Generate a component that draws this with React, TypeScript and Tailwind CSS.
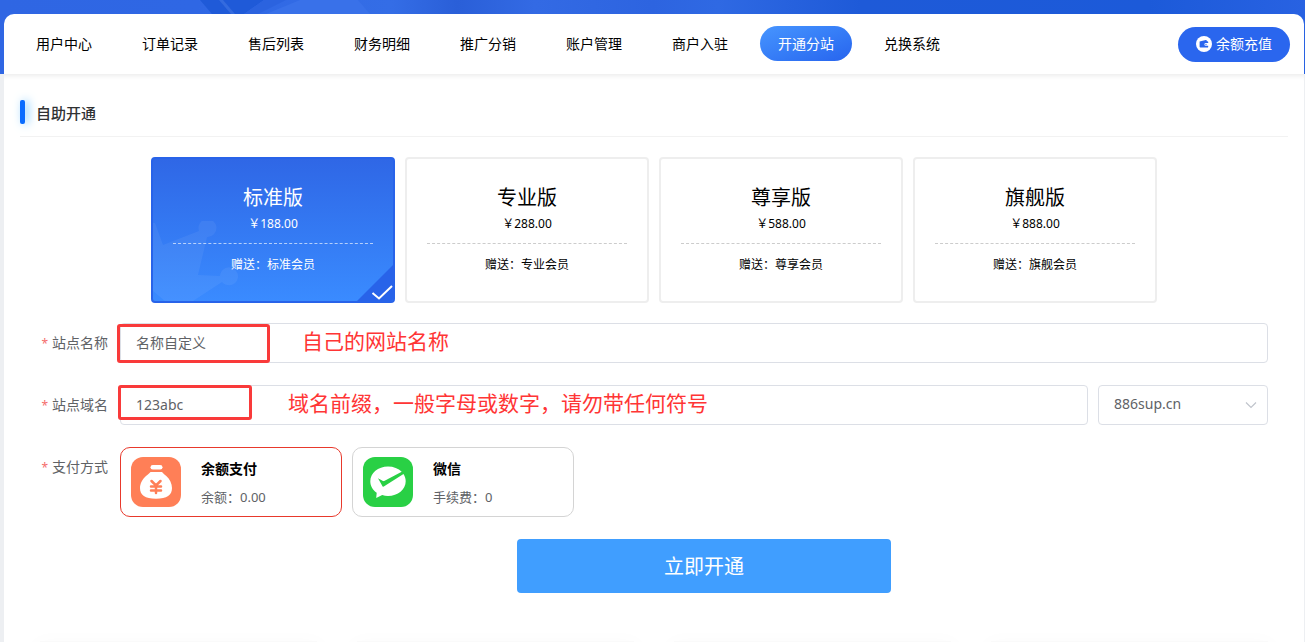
import { useState } from 'react';

interface Plan {
  id: string;
  name: string;
  price: string;
  gift: string;
}

const navItems = [
  '用户中心',
  '订单记录',
  '售后列表',
  '财务明细',
  '推广分销',
  '账户管理',
  '商户入驻',
  '开通分站',
  '兑换系统',
];

const plans: Plan[] = [
  { id: 'standard', name: '标准版', price: '188.00', gift: '标准会员' },
  { id: 'pro', name: '专业版', price: '288.00', gift: '专业会员' },
  { id: 'premium', name: '尊享版', price: '588.00', gift: '尊享会员' },
  { id: 'flagship', name: '旗舰版', price: '888.00', gift: '旗舰会员' },
];

const labelClass = '-ml-1 w-[104px] shrink-0 pr-3 text-right text-sm leading-10 text-[#606266]';
const inputClass =
  'h-10 w-full rounded border border-[#dcdfe6] bg-white px-[15px] pb-0.5 text-sm text-[#606266] outline-none';

function BannerTexture() {
  return (
    <svg
      className="absolute inset-0 h-full w-full"
      viewBox="0 0 1305 74"
      preserveAspectRatio="none"
      aria-hidden="true"
    >
      <defs>
        <linearGradient id="banner" x1="0" x2="1" y1="0" y2="0">
          <stop offset="0" stopColor="#2f66e3" />
          <stop offset="0.15" stopColor="#2f67e4" />
          <stop offset="0.3" stopColor="#346de6" />
          <stop offset="0.35" stopColor="#2a5fd8" />
          <stop offset="0.41" stopColor="#336ae4" />
          <stop offset="0.5" stopColor="#2d64e0" />
          <stop offset="0.55" stopColor="#2f69e3" />
          <stop offset="0.66" stopColor="#1e5ad8" />
          <stop offset="0.88" stopColor="#1c5ad9" />
          <stop offset="1" stopColor="#2862e2" />
        </linearGradient>
      </defs>
      <rect width="1305" height="74" fill="url(#banner)" />
      <path d="M200 0h64l-20 14h-32z" fill="#1f5ad8" />
      <path d="M219 0h4l12 14h-4z" fill="#4a7be6" opacity="0.5" />
      <path d="M264 0h22l-28 14h-14z" fill="#2b63df" />
      <path d="M300 0h58l12 14h-104z" fill="#3971e9" />
    </svg>
  );
}

function WalletIcon() {
  return (
    <svg className="h-4 w-4" viewBox="0 0 16 16" aria-hidden="true">
      <circle cx="8" cy="8" r="8" fill="#fff" />
      <path
        d="M3.6 5.5 9.8 4c.6-.1 1 .2 1 .8v.5h.6c.5 0 .8.3.8.8v.9H9.8a1.4 1.4 0 0 0 0 2.8h2.4v.9c0 .6-.3.9-.8.9H4.4c-.5 0-.8-.3-.8-.8z"
        fill="#2a66ee"
      />
      <circle cx="10" cy="8.4" r=".6" fill="#2a66ee" />
    </svg>
  );
}

function MoneyBagIcon() {
  return (
    <svg className="h-[50px] w-[50px] shrink-0" viewBox="0 0 50 50" aria-hidden="true">
      <rect width="50" height="50" rx="12" fill="#ff7f57" />
      <rect x="19.5" y="8" width="12" height="4.6" rx="2.3" fill="#fff" />
      <path
        d="M19.5 15h11.500c1.200 1.500 2.500 2.400 4.300 4C38.800 22 41 26.500 41 31c0 7-5 10.800-16 10.800S9 38 9 31c0-4.500 2.500-9 6-12 1.800-1.600 3.300-2.500 4.500-4z"
        fill="#fff"
      />
      <path
        d="m20.500 24 4.500 4.500 4.500-4.500M20 29.500h10M20 33.500h10M25 29v7"
        fill="none"
        stroke="#ff7f57"
        strokeWidth="2.500"
        strokeLinecap="round"
      />
    </svg>
  );
}

function WechatPayIcon() {
  return (
    <svg className="h-[50px] w-[50px] shrink-0" viewBox="0 0 50 50" aria-hidden="true">
      <rect width="50" height="50" rx="12" fill="#29d045" />
      <path
        d="M25 9.500C15 9.500 7.300 16 7.300 24.300c0 4.700 2.500 8.800 6.400 11.500L13.200 41l6-3c1.800.6 3.800.9 5.800.9 9.900 0 17.700-6.500 17.700-14.700 0-2.700-.8-5.100-2.200-7.300L20.800 29.600c-.5.3-1 .1-1.300-.4L15 21.300l5 2.800c.4.200.8.200 1.200 0l17.500-9.300C35.500 11.500 30.500 9.500 25 9.500z"
        fill="#fff"
      />
    </svg>
  );
}

function CrownMark() {
  return (
    <svg className="absolute bottom-0 left-0 h-20 w-[88px]" viewBox="0 0 88 80" aria-hidden="true">
      <g fill="#fff" opacity="0.06">
        <path d="M0 2h2l8 22 36-14a9 9 0 1 1 8 6l-9 38 22 1a9 9 0 1 1 2 6L40 80H12L0 70z" />
      </g>
    </svg>
  );
}

function PlanCard({ plan, selected, onSelect }: { plan: Plan; selected: boolean; onSelect: () => void }) {
  return (
    <label
      className={`relative flex h-[146px] w-[244px] cursor-pointer flex-col items-center overflow-hidden rounded border-2 pt-[25px] ${
        selected
          ? 'border-[#2863e9] bg-linear-to-b from-[#2f67e6] to-[#3a8bff] text-white'
          : 'border-[#eeeeee] bg-white text-black'
      }`}
    >
      <input
        type="radio"
        name="plan"
        className="absolute inset-0 h-full w-full cursor-pointer appearance-none"
        checked={selected}
        onChange={onSelect}
      />
      {selected && <CrownMark />}
      <span className="text-xl leading-7">{plan.name}</span>
      <span className="text-xs leading-6">￥{plan.price}</span>
      <span
        className={`mt-[7px] w-[200px] border-t border-dashed ${selected ? 'border-[#b5cffb]' : 'border-[#cccccc]'}`}
      />
      <span className="mt-[11px] text-xs leading-5">赠送：{plan.gift}</span>
      {selected && (
        <svg className="absolute right-0 bottom-0 h-9 w-9" viewBox="0 0 36 36" aria-hidden="true">
          <path d="M36 0v36H0z" fill="#2863e9" />
          <path d="m15.500 28 6.500 5.500L35 21" fill="none" stroke="#fff" strokeWidth="2" />
        </svg>
      )}
    </label>
  );
}

export default function App() {
  const [plan, setPlan] = useState('standard');
  const [payment, setPayment] = useState('balance');
  const [siteName, setSiteName] = useState('名称自定义');
  const [prefix, setPrefix] = useState('123abc');

  const payments = [
    { id: 'balance', title: '余额支付', note: '余额：0.00', icon: <MoneyBagIcon /> },
    { id: 'wechat', title: '微信', note: '手续费：0', icon: <WechatPayIcon /> },
  ];

  return (
    <div className="flex min-h-screen flex-col bg-[#edeff2] font-['Noto_Sans','Noto_Sans_CJK_SC',sans-serif]">
      <div className="relative pt-3.5 pr-px pl-1">
        <BannerTexture />
        <header className="relative flex h-[60px] items-center justify-between rounded-t-[10px] bg-white px-3.5">
          <nav className="mb-0.5 flex gap-3.5">
            {navItems.map((item) => (
              <a
                key={item}
                href="#"
                className={`h-[35px] rounded-full px-[18px] text-sm leading-[35px] whitespace-nowrap ${
                  item === '开通分站'
                    ? 'bg-linear-to-br from-[#4795ff] to-[#2864ee] text-white'
                    : 'text-black'
                }`}
              >
                {item}
              </a>
            ))}
          </nav>
          <button
            type="button"
            className="flex h-[35px] items-center gap-1 rounded-full bg-[#2a66ee] px-[18px] text-sm whitespace-nowrap text-white"
          >
            <WalletIcon />
            余额充值
          </button>
        </header>
      </div>

      <main className="mr-px ml-1 flex flex-1 flex-col overflow-hidden bg-white px-4 shadow-[inset_0_6px_5px_-4px_#ececec]">
        <div className="flex h-[63px] items-center gap-[11px] border-b border-[#f2f2f2] pt-3.5">
          <span className="h-6 w-[5px] rounded-xs bg-[#0a6cff] shadow-[3px_0_10px_#7cc8ff]" />
          <h2 className="pt-0.5 text-[15px] font-medium text-[#303133]">自助开通</h2>
        </div>

        <form onSubmit={(e) => e.preventDefault()} className="pt-5">
          <div role="radiogroup" aria-label="版本" className="flex flex-wrap justify-center gap-2.5">
            {plans.map((p) => (
              <PlanCard key={p.id} plan={p} selected={plan === p.id} onSelect={() => setPlan(p.id)} />
            ))}
          </div>

          <div className="flex flex-col gap-[22px] pt-5">
            <div className="flex pr-5">
              <label htmlFor="site-name" className={labelClass}>
                <span className="mr-1 text-xs text-[#f56c6c]">*</span>站点名称
              </label>
              <div className="relative flex-1">
                <input
                  id="site-name"
                  className={inputClass}
                  value={siteName}
                  onChange={(e) => setSiteName(e.target.value)}
                />
                <span className="pointer-events-none absolute top-px -left-[3px] h-[39px] w-[153px] rounded-[3px] border-3 border-[#f93a3a]" />
                <span className="pointer-events-none absolute top-0 left-[182px] text-[21px] leading-9 text-[#ff3535]">
                  自己的网站名称
                </span>
              </div>
            </div>

            <div className="flex pr-5">
              <label htmlFor="site-prefix" className={labelClass}>
                <span className="mr-1 text-xs text-[#f56c6c]">*</span>站点域名
              </label>
              <div className="relative flex-1">
                <input
                  id="site-prefix"
                  className={inputClass}
                  value={prefix}
                  onChange={(e) => setPrefix(e.target.value)}
                />
                <span className="pointer-events-none absolute top-0 -left-0.5 h-[35px] w-[134px] rounded-[3px] border-3 border-[#f93a3a]" />
                <span className="pointer-events-none absolute top-0 left-[168px] text-[21px] leading-9 whitespace-nowrap text-[#ff3535]">
                  域名前缀，一般字母或数字，请勿带任何符号
                </span>
              </div>
              <div className="relative ml-2.5 w-[170px]">
                <select aria-label="域名后缀" className={`${inputClass} appearance-none`}>
                  <option>886sup.cn</option>
                </select>
                <svg
                  className="pointer-events-none absolute top-[13px] right-2.5 h-3.5 w-3.5"
                  viewBox="0 0 14 14"
                  fill="none"
                  stroke="#c0c4cc"
                  aria-hidden="true"
                >
                  <path d="m2 4.500 5 5 5-5" strokeWidth="1.200" />
                </svg>
              </div>
            </div>

            <div className="flex pr-5" role="radiogroup" aria-labelledby="payment-label">
              <span id="payment-label" className={labelClass}>
                <span className="mr-1 text-xs text-[#f56c6c]">*</span>支付方式
              </span>
              <div className="flex flex-wrap gap-2.5">
                {payments.map((item) => (
                  <label
                    key={item.id}
                    className={`relative flex h-[70px] w-[222px] cursor-pointer items-center gap-5 rounded-[10px] border px-2.5 ${
                      payment === item.id ? 'border-[#e8392c]' : 'border-[#d4d4d4]'
                    }`}
                  >
                    <input
                      type="radio"
                      name="payment"
                      className="absolute inset-0 h-full w-full cursor-pointer appearance-none"
                      checked={payment === item.id}
                      onChange={() => setPayment(item.id)}
                    />
                    {item.icon}
                    <span className="flex flex-col pt-0.5 leading-7">
                      <span className="text-sm leading-7 font-bold text-black">{item.title}</span>
                      <span className="text-[13px] leading-7 text-[#606266]">{item.note}</span>
                    </span>
                  </label>
                ))}
              </div>
            </div>

            <div className="flex justify-center pl-[100px]">
              <button type="submit" className="h-[54px] w-[374px] rounded bg-[#409eff] pt-0.5 text-xl text-white">
                立即开通
              </button>
            </div>
          </div>
        </form>

        <div className="mt-auto grid grid-cols-4 gap-10 px-5 pt-5">
          {plans.map((p) => (
            <div key={p.id} className="h-px bg-[#fafafa] shadow-[0_8px_20px_4px_rgba(0,0,0,0.04)]" />
          ))}
        </div>
      </main>
    </div>
  );
}
